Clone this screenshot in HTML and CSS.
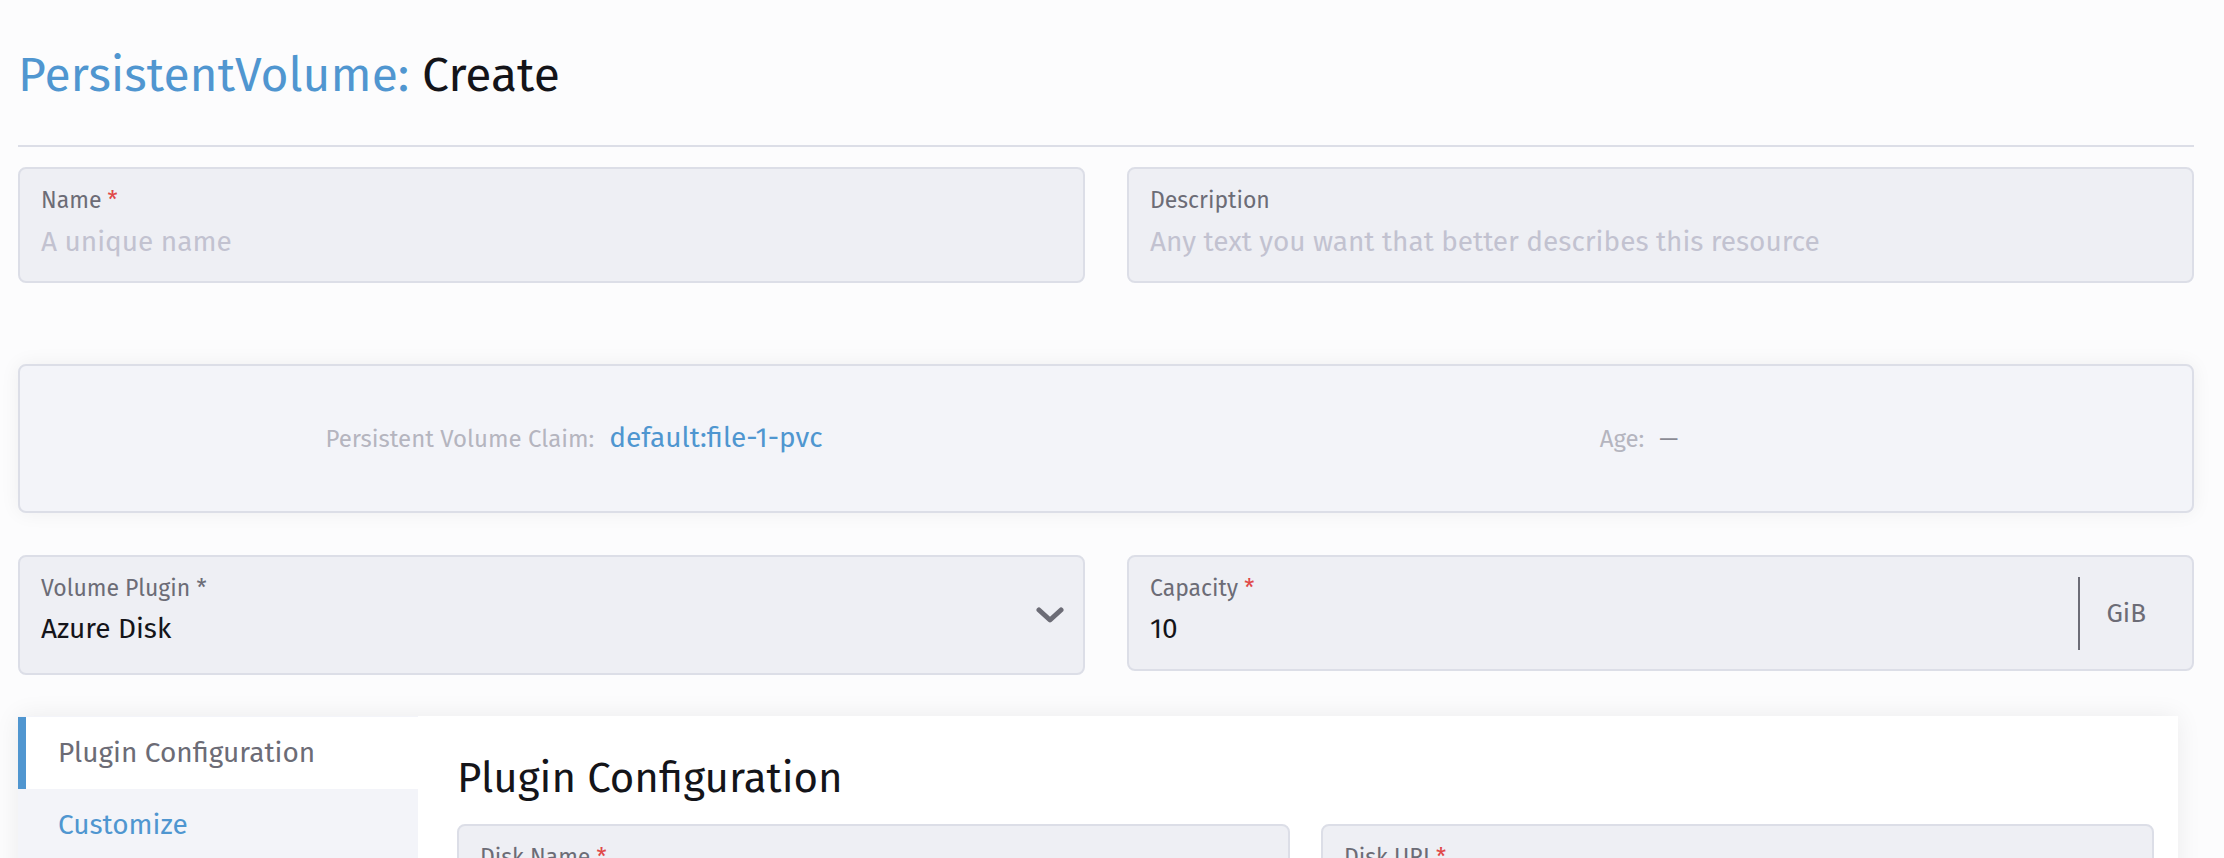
FILE: index.html
```html
<!DOCTYPE html>
<html lang="en">
<head>
<meta charset="utf-8">
<title>PersistentVolume: Create</title>
<link rel="stylesheet" href="styles.css">
</head>
<body>
<div class="page">
  <header class="masthead">
    <h1 class="title"><span class="type">PersistentVolume:</span> Create</h1>
  </header>

  <div class="grid2 row-top">
    <div class="field">
      <div class="label">Name <span class="req">*</span></div>
      <div class="value placeholder">A unique name</div>
    </div>
    <div class="field">
      <div class="label">Description</div>
      <div class="value placeholder">Any text you want that better describes this resource</div>
    </div>
  </div>

  <div class="banner">
    <div class="kv kv-left">
      <span class="k">Persistent Volume Claim:</span>
      <a class="v link">default:file-1-pvc</a>
    </div>
    <div class="kv kv-right">
      <span class="k">Age:</span>
      <span class="dash">&mdash;</span>
    </div>
  </div>

  <div class="grid2 row-mid">
    <div class="field select">
      <div class="field-body">
        <div class="label">Volume Plugin *</div>
        <div class="value">Azure Disk</div>
      </div>
      <svg class="chevron" width="28" height="16" viewBox="0 0 28 16" aria-hidden="true">
        <polyline points="3,3 14,13 25,3" fill="none" stroke="#6c6c76" stroke-width="5" stroke-linecap="round" stroke-linejoin="round"/>
      </svg>
    </div>
    <div class="field capacity">
      <div class="field-body">
        <div class="label">Capacity <span class="req">*</span></div>
        <div class="value">10</div>
      </div>
      <div class="suffix">GiB</div>
    </div>
  </div>

  <div class="tabs">
    <ul class="side">
      <li class="tab active">Plugin Configuration</li>
      <li class="tab link">Customize</li>
    </ul>
    <section class="panel">
      <h2 class="panel-title">Plugin Configuration</h2>
      <div class="grid2 disk-row">
        <div class="field">
          <div class="label">Disk Name <span class="req">*</span></div>
          <div class="value placeholder"></div>
        </div>
        <div class="field">
          <div class="label">Disk URI <span class="req">*</span></div>
          <div class="value placeholder"></div>
        </div>
      </div>
    </section>
  </div>
</div>
</body>
</html>
```

FILE: styles.css
```css
html, body {
  margin: 0;
  height: 858px;
  overflow: hidden;
}

body {
  background: #fcfcfd;
  font-family: "Fira Sans", Roboto, "Liberation Sans", sans-serif;
  color: #141419;
}

.page {
  padding: 0 30px 0 18px;
}

.masthead {
  padding: 51px 0 45px;
  border-bottom: 2px solid #dcdee7;
}

.title {
  margin: 0;
  font-size: 48px;
  line-height: 49px;
  font-weight: 400;
  color: #141419;
}

.type {
  color: #5096d0;
}

.grid2 {
  display: grid;
  grid-template-columns: 1fr 1fr;
  column-gap: 42px;
  align-items: start;
}

.row-top {
  margin-top: 20px;
}

.field {
  box-sizing: border-box;
  height: 116px;
  background: #eeeff4;
  border: 2px solid #dcdee7;
  border-radius: 8px;
  padding: 17px 21px 0;
}

.label {
  font-size: 23px;
  line-height: 28px;
  color: #6c6c76;
  white-space: nowrap;
}

.req {
  color: #e04848;
}

.value {
  margin-top: 11px;
  font-size: 28px;
  line-height: 34px;
  min-height: 34px;
  color: #141419;
  white-space: nowrap;
}

.placeholder {
  color: #c2c2d0;
}

.banner {
  box-sizing: border-box;
  margin-top: 81px;
  height: 149px;
  background: #f3f4f9;
  border: 2px solid #dcdee7;
  border-radius: 8px;
  box-shadow: 0 0 20px rgba(0, 0, 0, 0.06);
  display: grid;
  grid-template-columns: 1fr 1fr;
  align-items: center;
}

.kv {
  display: flex;
  align-items: baseline;
  justify-content: center;
  gap: 15px;
  line-height: 34px;
}

.kv-left {
  padding-left: 22px;
}

.kv-right {
  padding-right: 20px;
}

.k {
  font-size: 24px;
  color: #b5b5bf;
}

.v {
  font-size: 28px;
}

.link {
  color: #4f96d0;
  text-decoration: none;
}

.dash {
  font-size: 24px;
  color: #8a8a94;
}

.row-mid {
  margin-top: 42px;
}

.field.select {
  height: 120px;
  display: flex;
  align-items: center;
  padding: 0 19px 0 21px;
}

.field.capacity {
  display: flex;
  align-items: center;
  padding: 0 0 0 21px;
}

.field-body {
  flex: 1;
  align-self: stretch;
  padding-top: 17px;
}

.field-body .value {
  margin-top: 10px;
}

.chevron {
  display: block;
  flex: none;
}

.suffix {
  flex: none;
  height: 73px;
  display: flex;
  align-items: center;
  border-left: 2px solid #6c6c76;
  padding: 0 46px 0 26px;
  font-size: 26px;
  color: #6c6c76;
}

.tabs {
  margin-top: 41px;
  margin-right: 16px;
  display: flex;
  height: 400px;
  box-shadow: 0 0 24px rgba(0, 0, 0, 0.07);
}

.side {
  list-style: none;
  margin: 0;
  padding: 1px 0 0;
  width: 400px;
  flex: none;
  background: #f3f4f9;
}

.tab {
  height: 72px;
  line-height: 72px;
  padding-left: 40px;
  font-size: 28px;
  color: #6c6c76;
  white-space: nowrap;
}

.tab.active {
  background: #ffffff;
  border-left: 8px solid #5096d0;
  padding-left: 32px;
}

.tab.link {
  color: #4f96d0;
}

.panel {
  flex: 1;
  background: #ffffff;
  padding: 37px 24px 0 39px;
}

.panel-title {
  margin: 0 0 21px;
  font-size: 42px;
  line-height: 50px;
  font-weight: 400;
  color: #141419;
}

.disk-row {
  column-gap: 31px;
}
```
